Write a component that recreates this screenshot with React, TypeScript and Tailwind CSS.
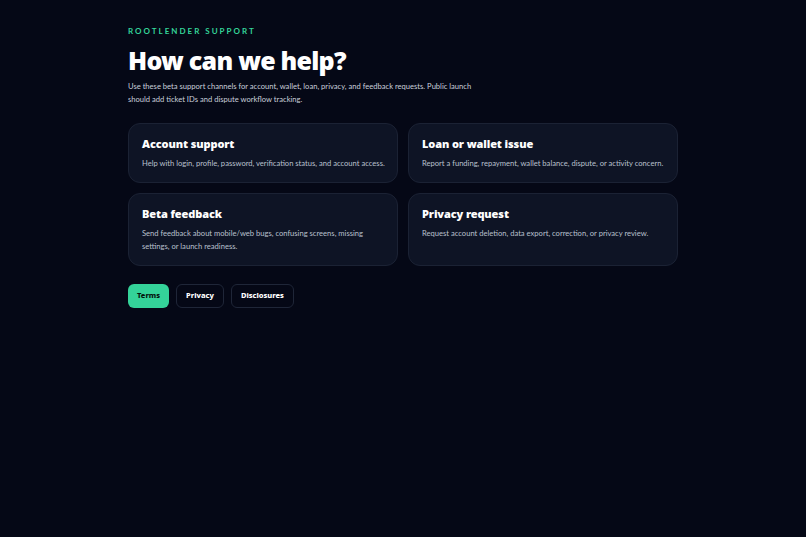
import React from "react";

const cards = [
  { t: "Account support", d: "Help with login, profile, password, verification status, and account access." },
  { t: "Loan or wallet issue", d: "Report a funding, repayment, wallet balance, dispute, or activity concern." },
  { t: "Beta feedback", d: "Send feedback about mobile/web bugs, confusing screens, missing settings, or launch readiness." },
  { t: "Privacy request", d: "Request account deletion, data export, correction, or privacy review." },
];

const heavy = { fontFamily: '"Noto Sans", sans-serif' };

export default function App() {
  return (
    <div className="min-h-[537px] w-full bg-[#050816] text-white" style={{ fontFamily: 'Lato, "Open Sans", sans-serif' }}>
      <div className="mx-auto w-[550px] pt-[26px]">
        <div className="text-[8px] font-bold tracking-[0.25em] text-[#34d399] leading-[10px]">ROOTLENDER SUPPORT</div>
        <h1 style={heavy} className="mt-[8px] text-[25px] font-black leading-[32px] tracking-[-0.03em]">How can we help?</h1>
        <p className="mt-[4px] w-[350px] text-[7.6px] leading-[13px] text-[#c9cfdb]">
          Use these beta support channels for account, wallet, loan, privacy, and feedback requests. Public launch should add ticket IDs and dispute workflow tracking.
        </p>
        <div className="mt-[17px] grid grid-cols-2 gap-[10px]">
          {cards.map((c) => (
            <div key={c.t} className="rounded-[12px] border border-[#1b2234] bg-[#0e1425] pl-[13px] pr-[8px] pt-[12px] pb-[12px]">
              <div style={heavy} className="text-[11px] font-black leading-[16px] tracking-[-0.01em]">{c.t}</div>
              <div className="mt-[5px] text-[7.6px] leading-[13px] text-[#b9c0ce]">{c.d}</div>
            </div>
          ))}
        </div>
        <div className="mt-[18px] flex gap-[7px]">
          <button style={heavy} className="h-[24px] rounded-[6px] bg-[#34d399] px-[9px] text-[7.5px] font-extrabold text-[#04140d]">Terms</button>
          <button style={heavy} className="h-[24px] rounded-[6px] border border-[#1f2638] bg-[#050816] px-[9px] text-[7.5px] font-extrabold text-white">Privacy</button>
          <button style={heavy} className="h-[24px] rounded-[6px] border border-[#1f2638] bg-[#050816] px-[9px] text-[7.5px] font-extrabold text-white">Disclosures</button>
        </div>
      </div>
    </div>
  );
}
